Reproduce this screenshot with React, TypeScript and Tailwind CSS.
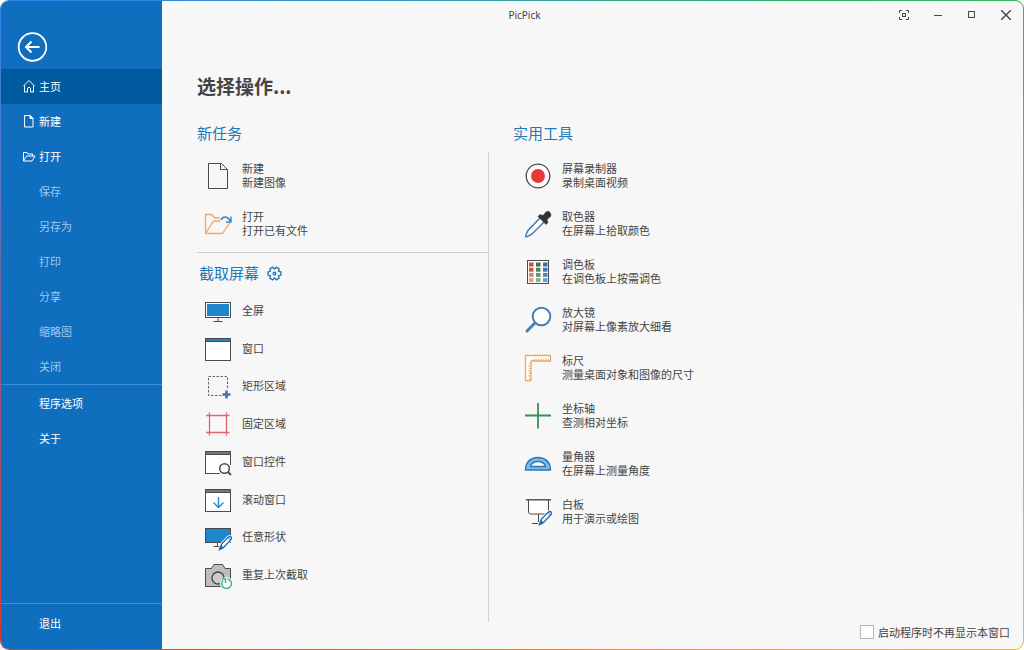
import type { ReactNode } from 'react';

interface IconProps {
  children: ReactNode;
}

interface Action {
  title: string;
  detail?: string;
  icon: ReactNode;
}

interface NavItem {
  label: string;
  icon?: ReactNode;
  active?: boolean;
  disabled?: boolean;
}

function Icon({ children }: IconProps) {
  return (
    <svg className="size-7 shrink-0" viewBox="0 0 28 28" fill="none" stroke="#4a4a4a" aria-hidden="true">
      {children}
    </svg>
  );
}

function NavIcon({ children }: IconProps) {
  return (
    <svg className="size-3.5" viewBox="0 0 14 14" fill="none" stroke="currentColor" aria-hidden="true">
      {children}
    </svg>
  );
}

function Pencil() {
  return (
    <g>
      <path d="M15.5 26.5l2-5.5 7-7q1.5-1 2.5 0t0 2.5l-7 7z" fill="#f7f7f7" stroke="#f7f7f7" strokeWidth="3" />
      <path d="M15.5 26.5l2-5.5 7-7q1.5-1 2.5 0t0 2.5l-7 7.5z" fill="#ffffff" stroke="#1b6ab0" strokeWidth="1.3" />
      <path d="M15.5 26.5l1.5-4 2.5 2.5z" fill="#1b6ab0" stroke="#1b6ab0" />
      <path d="M24 14.500l2.500 2.500" stroke="#1b6ab0" />
    </g>
  );
}

function WindowFrame({ bar }: { bar: string }) {
  return (
    <g>
      <rect x="1.5" y="3.5" width="25" height="22" fill="#ffffff" />
      <rect x="1.5" y="3.5" width="25" height="3" fill={bar} />
    </g>
  );
}

const navItems: NavItem[] = [
  {
    label: '主页',
    active: true,
    icon: (
      <NavIcon>
        <path d="M1.5 7L7 1.500 12.5 7M2.5 6.5V13h3V9Q7 7.500 8.5 9v4h3V6.500" />
      </NavIcon>
    ),
  },
  {
    label: '新建',
    icon: (
      <NavIcon>
        <path d="M2.5 1.5H8l3 3V13H2.5z" />
        <path d="M8 1.5v3h3z" fill="currentColor" />
      </NavIcon>
    ),
  },
  {
    label: '打开',
    icon: (
      <NavIcon>
        <path d="M1.5 12V3.5H5L6 5h4.5v2M1.5 12l3-5H13l-3 5z" />
      </NavIcon>
    ),
  },
  { label: '保存', disabled: true },
  { label: '另存为', disabled: true },
  { label: '打印', disabled: true },
  { label: '分享', disabled: true },
  { label: '缩略图', disabled: true },
  { label: '关闭', disabled: true },
];

const taskActions: Action[] = [
  {
    title: '新建',
    detail: '新建图像',
    icon: (
      <Icon>
        <path d="M4.5 1.5h13l6 6v19h-19zM16.5 1.5v6h7" />
      </Icon>
    ),
  },
  {
    title: '打开',
    detail: '打开已有文件',
    icon: (
      <Icon>
        <path
          d="M1.5 23.5v-19h6L11 8h5M1.5 23.5L9.5 11H16M1.5 23.5h17L26 12.5"
          stroke="#eda968"
          strokeWidth="1.3"
        />
        <path d="M17 10q2-4 6-2.500 3 1.500 3.500 4.500M27 6.500V12h-5" stroke="#2e86c4" strokeWidth="1.4" />
      </Icon>
    ),
  },
];

const captureActions: Action[] = [
  {
    title: '全屏',
    icon: (
      <Icon>
        <rect x="1.5" y="5.5" width="25" height="15" fill="#ffffff" />
        <rect x="3" y="7" width="22" height="12" fill="#1e87cb" stroke="none" />
        <path d="M14 20.500V24M9.500 24.500h9" />
      </Icon>
    ),
  },
  {
    title: '窗口',
    icon: (
      <Icon>
        <WindowFrame bar="#2a83bd" />
      </Icon>
    ),
  },
  {
    title: '矩形区域',
    icon: (
      <Icon>
        <rect x="4.5" y="4.5" width="19" height="19" strokeDasharray="2.5 1.5" stroke="#666666" />
        <circle cx="22.5" cy="22.5" r="5" fill="#f7f7f7" stroke="none" />
        <path d="M22.5 18.500v8M18.500 22.5h8" stroke="#3a75b0" strokeWidth="2.5" />
      </Icon>
    ),
  },
  {
    title: '固定区域',
    icon: (
      <Icon>
        <path d="M5.5 2.5v23M22.5 2.5v23M2 5.5h23.500M2 22.5h23.500" stroke="#d9686f" strokeWidth="1.3" />
      </Icon>
    ),
  },
  {
    title: '窗口控件',
    icon: (
      <Icon>
        <WindowFrame bar="#777777" />
        <rect x="16" y="17" width="12" height="11" fill="#f7f7f7" stroke="none" />
        <circle cx="20.5" cy="20.500" r="4.8" fill="#ffffff" strokeWidth="1.5" />
        <path d="M24 24l3 3" strokeWidth="1.8" />
      </Icon>
    ),
  },
  {
    title: '滚动窗口',
    icon: (
      <Icon>
        <WindowFrame bar="#777777" />
        <path d="M14.5 11v10.500M9.500 16.500l5 5 5-5" stroke="#2e86c4" strokeWidth="1.4" />
      </Icon>
    ),
  },
  {
    title: '任意形状',
    icon: (
      <Icon>
        <rect x="1.5" y="5.5" width="25" height="14" fill="#1e87cb" />
        <path d="M13.500 20v4M9.500 23.500H15" />
        <Pencil />
      </Icon>
    ),
  },
  {
    title: '重复上次截取',
    icon: (
      <Icon>
        <path d="M1.5 7.5h6l2.500-4h8.500l2.500 4h5.500v18h-25z" fill="#bebebe" />
        <circle cx="14" cy="17" r="6" strokeWidth="1.4" fill="#cccccc" />
        <circle cx="22.500" cy="22.500" r="6.500" fill="#f7f7f7" stroke="none" />
        <path d="M19 19.500a4.800 4.800 0 1 0 4.500-1.500M18 18h3.500v4" stroke="#42b57a" strokeWidth="1.400" />
      </Icon>
    ),
  },
];

const swatches = [
  ['#c4553b', '#3f6b52', '#3d6ea5'],
  ['#cf5a3e', '#4a8263', '#3b74b5'],
  ['#dd8468', '#5d9a7c', '#5583b8'],
  ['#e8a184', '#7fb39a', '#6d9ccc'],
];

const toolActions: Action[] = [
  {
    title: '屏幕录制器',
    detail: '录制桌面视频',
    icon: (
      <Icon>
        <circle cx="14" cy="14" r="11.8" fill="#ffffff" strokeWidth="1.3" />
        <circle cx="14" cy="14" r="7" fill="#e53935" stroke="none" />
      </Icon>
    ),
  },
  {
    title: '取色器',
    detail: '在屏幕上拾取颜色',
    icon: (
      <Icon>
        <path d="M16 8L4 20.500 1.500 26l1 1 5-2.500L20 12" fill="#ffffff" stroke="#3a75b0" strokeWidth="1.4" />
        <path
          d="M14 6.500l2-2 3 1L22 2q2.500-1.500 4 .5t.5 4L23 9.500l1 3-2 2z"
          fill="#333333"
          stroke="#333333"
          strokeWidth=".5"
        />
      </Icon>
    ),
  },
  {
    title: '调色板',
    detail: '在调色板上按需调色',
    icon: (
      <Icon>
        <rect x="3.5" y="2.5" width="21" height="23" fill="#ffffff" />
        {swatches.map((row, y) =>
          row.map((color, x) => (
            <rect key={color} x={5 + x * 7} y={4.5 + y * 5.2} width="4.5" height="4" fill={color} stroke="none" />
          ))
        )}
      </Icon>
    ),
  },
  {
    title: '放大镜',
    detail: '对屏幕上像素放大细看',
    icon: (
      <Icon>
        <circle cx="17.500" cy="10.500" r="8.800" fill="#ffffff" stroke="#4a7fb5" strokeWidth="2" />
        <path d="M11 17l-8 8" stroke="#4a7fb5" strokeWidth="3" strokeLinecap="round" />
      </Icon>
    ),
  },
  {
    title: '标尺',
    detail: '测量桌面对象和图像的尺寸',
    icon: (
      <Icon>
        <path d="M1.5 1.5h25V7H7v19.500H1.500z" fill="#ffffff" stroke="#eda968" strokeWidth="1.3" />
        <path
          d="M9.5 7V5M12 7V4M14.5 7V5M17 7V4M19.5 7V5M22 7V4M24.5 7V5M7 9.500H5M7 12H4M7 14.500H5M7 17H4M7 19.500H5M7 22H4M7 24.500H5"
          stroke="#eda968"
        />
      </Icon>
    ),
  },
  {
    title: '坐标轴',
    detail: '查测相对坐标',
    icon: (
      <Icon>
        <path d="M14 1v25.500M1 13.500h26" stroke="#35915a" strokeWidth="1.8" />
      </Icon>
    ),
  },
  {
    title: '量角器',
    detail: '在屏幕上测量角度',
    icon: (
      <Icon>
        <path d="M1.5 20v-1Q2.500 8 14 7.500 25.500 8 26.500 19v1z" fill="#7fbbea" stroke="#2f77b3" strokeWidth="1.3" />
        <path d="M6.500 16.500q1.500-5 7.500-5t7.500 5z" fill="#ffffff" stroke="#2f77b3" strokeWidth="1.3" />
      </Icon>
    ),
  },
  {
    title: '白板',
    detail: '用于演示或绘图',
    icon: (
      <Icon>
        <path d="M4.5 2v11q0 3 2 3h18V2" fill="#ffffff" />
        <path d="M2 1.800h25" strokeWidth="1.4" />
        <path d="M14.500 16v8M8 25.500h6" />
        <Pencil />
      </Icon>
    ),
  },
];

function NavButton({ label, icon, active, disabled }: NavItem) {
  return (
    <button
      type="button"
      disabled={disabled}
      className={`flex h-[35px] w-full items-center gap-[3px] pb-px pl-[21px] text-left text-[11px] leading-4 ${
        active ? 'bg-[#005a9e]' : ''
      } ${disabled ? 'text-[#9fc9ee]' : 'text-white'}`}
    >
      <span className="w-3.5">{icon}</span>
      {label}
    </button>
  );
}

function ActionButton({ title, detail, icon }: Action) {
  return (
    <button type="button" className="flex h-full w-full items-center gap-2.5 text-left text-[11px] leading-[14px]">
      {icon}
      <span className="pb-0.5">
        <span className="block">{title}</span>
        {detail && <span className="block">{detail}</span>}
      </span>
    </button>
  );
}

function ActionList({ actions, className }: { actions: Action[]; className: string }) {
  return (
    <ul className={className}>
      {actions.map((action) => (
        <li key={action.title}>
          <ActionButton {...action} />
        </li>
      ))}
    </ul>
  );
}

function Heading({ children }: { children: ReactNode }) {
  return <h2 className="text-[15px] leading-[18px] text-[#1f78b8]">{children}</h2>;
}

function Sidebar() {
  return (
    <nav className="flex w-[161px] shrink-0 flex-col bg-[#106ebe] text-white">
      <button type="button" aria-label="返回" className="mt-[31px] mb-[7px] ml-4 size-[30px]">
        <svg viewBox="0 0 30 30" fill="none" stroke="currentColor">
          <circle cx="15.5" cy="15" r="13.8" strokeWidth="1.8" />
          <path d="M22.500 15H9M14.500 9.500L9 15l5.500 5.500" strokeWidth="2" />
        </svg>
      </button>
      {navItems.map((item) => (
        <NavButton key={item.label} {...item} />
      ))}
      <div className="border-t border-[#3b8fdc] pt-px">
        <NavButton label="程序选项" />
        <NavButton label="关于" />
      </div>
      <div className="mt-auto border-t border-[#3b8fdc] pt-0.5 pb-2">
        <NavButton label="退出" />
      </div>
    </nav>
  );
}

function TitleBar() {
  const button = 'grid w-[34px] place-items-center';

  return (
    <header className="flex h-7">
      <div className="flex-1 text-center font-['Noto_Sans',sans-serif] text-[10px] leading-7">PicPick</div>
      <button type="button" aria-label="截图" className={button}>
        <svg className="size-2.5" viewBox="0 0 10 10" fill="none" stroke="currentColor">
          <path d="M.5 3V.5H3M7 .5h2.500V3M9.500 7v2.500H7M3 9.500H.5V7" />
          <rect x="3.500" y="3.500" width="3" height="3" />
        </svg>
      </button>
      <button type="button" aria-label="最小化" className={button}>
        <svg className="size-2.5" viewBox="0 0 10 10" stroke="currentColor">
          <path d="M1 5.500h8" />
        </svg>
      </button>
      <button type="button" aria-label="最大化" className={button}>
        <svg className="size-2.5" viewBox="0 0 10 10" fill="none" stroke="currentColor">
          <rect x="1.5" y="1.5" width="6" height="6" />
        </svg>
      </button>
      <button type="button" aria-label="关闭窗口" className={button}>
        <svg className="size-2.5" viewBox="0 0 10 10" stroke="currentColor" strokeWidth="1.4">
          <path d="M0 0l10 10M10 0L0 10" />
        </svg>
      </button>
    </header>
  );
}

export default function App() {
  return (
    <div className="flex min-h-screen bg-white font-['Noto_Sans_CJK_SC',sans-serif] text-[#444444]">
      {/* Colored window edge: blue, green, yellow and red corners */}
      <div className="flex flex-1 rounded-[9px] bg-[conic-gradient(from_302deg,#2f86ee,#35b558_116deg,#f0b93a_180deg,#d63a3a_296deg,#2f86ee)] p-px">
        <div className="flex flex-1 overflow-hidden rounded-lg bg-[#f7f7f7]">
          <Sidebar />
          <div className="flex flex-1 flex-col">
            <TitleBar />
            <main className="mt-[43px] ml-[35px]">
              <h1 className="text-[19px] leading-7 font-bold">选择操作...</h1>
              <div className="mt-6 grid grid-cols-[292px_1fr]">
                <section>
                  <Heading>新任务</Heading>
                  <div className="mt-2.5 border-r border-[#cfcfcf] pb-7">
                    <ActionList actions={taskActions} className="grid auto-rows-[48px] pl-[7px]" />
                    <div className="mt-1 border-t border-[#cfcfcf]" />
                    <div className="mt-[11px] flex items-center gap-2 pl-0.5 text-[#1f78b8]">
                      <Heading>截取屏幕</Heading>
                      <button type="button" aria-label="截取设置">
                        <svg
                          className="size-[15px]"
                          viewBox="0 0 15 15"
                          fill="none"
                          stroke="currentColor"
                          strokeWidth="1.4"
                          strokeLinejoin="round"
                        >
                          <path d="M13.900 5.900v3.200l-2.400.7.6 2.400-2.800 1.600-1.800-1.700-1.800 1.700-2.800-1.600.6-2.400-2.400-.7V5.900l2.400-.7-.6-2.400 2.800-1.600 1.800 1.700 1.800-1.700 2.800 1.600-.6 2.400z" />
                          <circle cx="7.5" cy="7.5" r="1.3" />
                        </svg>
                      </button>
                    </div>
                    <ActionList actions={captureActions} className="mt-2.5 grid h-[302px] auto-rows-fr pl-[7px]" />
                  </div>
                </section>
                <section className="pl-6">
                  <Heading>实用工具</Heading>
                  <ActionList actions={toolActions} className="mt-2.5 grid auto-rows-[48px] pl-[11px]" />
                </section>
              </div>
            </main>
            <footer className="mt-auto flex justify-end pr-[13px] pb-2">
              <label className="flex items-center gap-1 text-[11px] leading-[18px]">
                <input type="checkbox" className="size-3.5 appearance-none border border-[#b5b5b5] bg-white" />
                启动程序时不再显示本窗口
              </label>
            </footer>
          </div>
        </div>
      </div>
    </div>
  );
}
